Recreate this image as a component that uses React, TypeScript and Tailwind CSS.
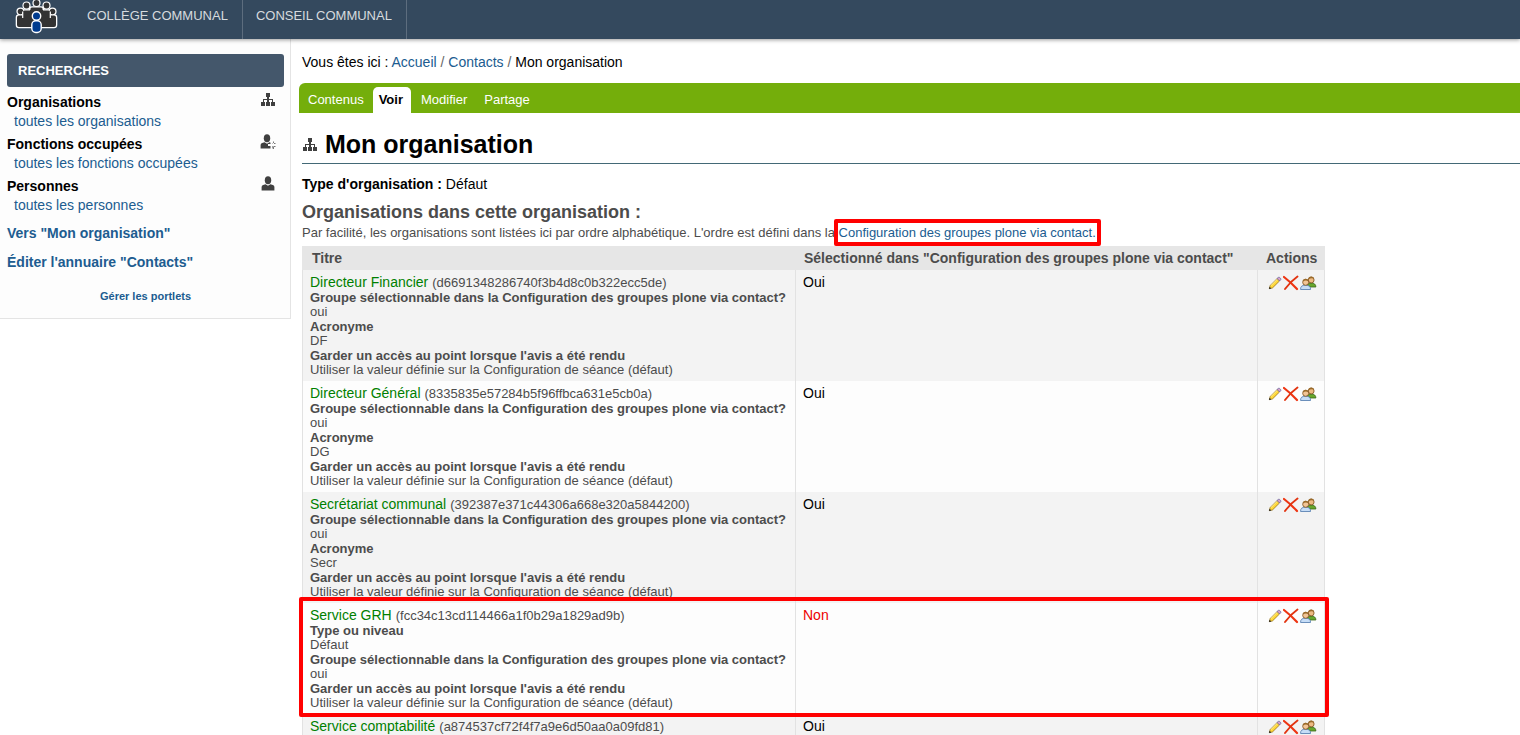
import type { ReactNode } from "react";

type Detail = { label: string; value: string };
type Org = { name: string; uid: string; selected: boolean; details: Detail[]; highlighted?: boolean };

const SELECTABLE = "Groupe sélectionnable dans la Configuration des groupes plone via contact?";
const KEEP_ACCESS: Detail = {
  label: "Garder un accès au point lorsque l'avis a été rendu",
  value: "Utiliser la valeur définie sur la Configuration de séance (défaut)",
};

const organisations: Org[] = [
  {
    name: "Directeur Financier",
    uid: "d6691348286740f3b4d8c0b322ecc5de",
    selected: true,
    details: [{ label: SELECTABLE, value: "oui" }, { label: "Acronyme", value: "DF" }, KEEP_ACCESS],
  },
  {
    name: "Directeur Général",
    uid: "8335835e57284b5f96ffbca631e5cb0a",
    selected: true,
    details: [{ label: SELECTABLE, value: "oui" }, { label: "Acronyme", value: "DG" }, KEEP_ACCESS],
  },
  {
    name: "Secrétariat communal",
    uid: "392387e371c44306a668e320a5844200",
    selected: true,
    details: [{ label: SELECTABLE, value: "oui" }, { label: "Acronyme", value: "Secr" }, KEEP_ACCESS],
  },
  {
    name: "Service GRH",
    uid: "fcc34c13cd114466a1f0b29a1829ad9b",
    selected: false,
    highlighted: true,
    details: [{ label: "Type ou niveau", value: "Défaut" }, { label: SELECTABLE, value: "oui" }, KEEP_ACCESS],
  },
  { name: "Service comptabilité", uid: "a874537cf72f4f7a9e6d50aa0a09fd81", selected: true, details: [] },
];

const LOGO_BODY =
  "M2 17.500q0-2 2-2h3.500V13q0-2.500 2-2.500H15V9.500q0-2 2-2h9q2 0 2 2v1h5.500q2 0 2 2.500v2.500H39q2 0 2 2v7.500q0 2-2 2H4q-2 0-2-2z";

function Logo() {
  return (
    <svg width="44" height="34" viewBox="0 0 44 34" aria-hidden="true">
      <g fill="#fff" stroke="#fff" strokeWidth="2.600" strokeLinejoin="round">
        <path d={LOGO_BODY} />
        <circle cx="5.500" cy="11.500" r="2.800" />
        <circle cx="11.500" cy="5.500" r="2.800" />
        <circle cx="21.500" cy="3" r="2.800" />
        <circle cx="31.500" cy="5.500" r="2.800" />
        <circle cx="37.500" cy="11.500" r="2.800" />
      </g>
      <g fill="#333">
        <path d={LOGO_BODY} />
        <circle cx="5.500" cy="11.500" r="2.800" />
        <circle cx="11.500" cy="5.500" r="2.900" />
        <circle cx="21.500" cy="3" r="2.900" />
        <circle cx="31.500" cy="5.500" r="2.900" />
        <circle cx="37.500" cy="11.500" r="2.800" />
      </g>
      <path
        d="M7.700 11.500v6.500M35.300 11.500v6.500M14.800 6.500v3.500M28.200 6.500v3.500"
        stroke="#fff"
        strokeWidth="1.200"
      />
      <g fill="#003b8e" stroke="#fff" strokeWidth="1.400">
        <circle cx="21.500" cy="16" r="4.200" />
        <rect x="16.800" y="20.700" width="9.400" height="11.800" rx="4" />
      </g>
    </svg>
  );
}

function SitemapIcon() {
  return (
    <svg width="14" height="15" viewBox="0 -1 14 15" fill="#404040" shapeRendering="crispEdges" aria-hidden="true">
      <path d="M5 0h4v4H5zM6 4h2v5H6zM2 6h10v1H2zM2 6h1v3H2zM11 6h1v3h-1zM0 9h4v4H0zM5 9h4v4H5zM10 9h4v4h-4z" />
    </svg>
  );
}

function PersonIcon({ plus }: { plus?: boolean }) {
  return (
    <svg width="16" height="16" viewBox="0 0 16 16" aria-hidden="true">
      <g transform={plus ? "translate(0 0)" : "translate(1 0)"}>
        <ellipse cx="7" cy="4.200" rx="3.200" ry="4" fill="#404040" />
        <path d="M.6 14.500V11q0-1.500 1.500-2l2.500-.8L7 9.800l2.400-1.600 2.500.8q1.500.5 1.500 2v3.500z" fill="#404040" />
      </g>
      {plus && (
        <>
          <path d="M11.500 7.500v7.500M8 11h7.500" stroke="#fdfdfd" strokeWidth="2" />
          <path d="M13.500 7.500V9M13.500 13v2M14 9.500h1.500M14 12.500h1.500" stroke="#777" strokeWidth="1" />
        </>
      )}
    </svg>
  );
}

function PencilIcon() {
  return (
    <svg width="15" height="16" viewBox="0 0 15 16" aria-hidden="true">
      <path d="M1.300 13.700l.9-3.200L9.300 3.400l2.400 2.400L4.500 12.900z" fill="#ffd83a" stroke="#8a6410" strokeWidth=".7" />
      <path d="M2.800 10.700L9.500 4" stroke="#fff2a0" strokeWidth=".9" />
      <path d="M9 3.500L11.500 6l1.200-1.200q.5-.7-.1-1.400l-.9-.9q-.8-.6-1.500 0z" fill="#d9a0c8" stroke="#5a5a98" strokeWidth=".7" />
      <path d="M1 14l.6-2.300 1.700 1.700z" fill="#222" />
    </svg>
  );
}

function CrossIcon() {
  return (
    <svg width="16" height="16" viewBox="0 0 16 16" aria-hidden="true">
      <path d="M1 2q6.500 5 13 12" fill="none" stroke="#ee3512" strokeWidth="2.200" strokeLinecap="round" />
      <path d="M14.500 1.500Q7.500 6.500 2 14" fill="none" stroke="#e2330f" strokeWidth="1.900" strokeLinecap="round" />
    </svg>
  );
}

function GroupIcon() {
  return (
    <svg width="18" height="16" viewBox="-1 0 18 16" aria-hidden="true">
      <path d="M7 12q-.3-3.800 4-4 4.800 0 4.900 4z" fill="#67a62c" stroke="#376716" strokeWidth=".8" />
      <circle cx="11.200" cy="5" r="2.900" fill="#edba83" stroke="#7a4d18" strokeWidth=".8" />
      <path d="M8.300 4.200q.1-2.700 2.900-2.700 2.800 0 2.900 2.700-2-1.700-5.800 0z" fill="#9a6a2a" />
      <path d="M.6 14.500q-.4-4.300 4.900-4.400 5.400.1 5 4.400z" fill="#c6ddf7" stroke="#4d76ab" strokeWidth=".8" />
      <circle cx="5.700" cy="7.300" r="3" fill="#f2c596" stroke="#7a4d18" strokeWidth=".8" />
      <path d="M2.700 6.300q.2-2.600 3-2.600t3 2.600Q6 4.700 2.700 6.300z" fill="#9a6a2a" />
    </svg>
  );
}

function SearchSection({ title, link, icon }: { title: string; link: string; icon: ReactNode }) {
  return (
    <div className="mb-1">
      <div className="flex justify-between">
        <h3 className="font-bold leading-5">{title}</h3>
        <span className="mr-2 flex h-5 w-4 items-start justify-center">{icon}</span>
      </div>
      <a href="#" className="block pl-[7px] leading-[18px] text-[#205c90]">{link}</a>
    </div>
  );
}

function Sidebar() {
  return (
    <aside className="w-[291px] shrink-0 self-start border-r border-b border-[#e4e4e4] bg-[#fdfdfd] pt-[15px] pr-[6px] pb-[14px] pl-[7px]">
      <h2 className="mb-[5px] rounded-[3px] bg-[#44576b] px-[11px] text-[13px] font-bold leading-[33px] text-white">
        RECHERCHES
      </h2>
      <SearchSection title="Organisations" link="toutes les organisations" icon={<SitemapIcon />} />
      <SearchSection title="Fonctions occupées" link="toutes les fonctions occupées" icon={<PersonIcon plus />} />
      <SearchSection title="Personnes" link="toutes les personnes" icon={<PersonIcon />} />
      <a href="#" className="mt-[10px] block font-bold leading-[18px] text-[#205c90]">Vers "Mon organisation"</a>
      <a href="#" className="mt-[11px] block font-bold leading-[18px] text-[#205c90]">Éditer l'annuaire "Contacts"</a>
      <a href="#" className="mt-[17px] block text-center text-[11px] font-bold leading-4 text-[#205c90]">
        Gérer les portlets
      </a>
    </aside>
  );
}

function OrgRow({ org }: { org: Org }) {
  return (
    <tr className="relative align-top odd:bg-[#f3f3f3] even:bg-[#fdfdfd]">
      <td className="border-x border-[#e2e2e2] px-[7px] pt-[5px] pb-1 text-[13px] leading-[14px] text-[#4c4c4c]">
        <div className="flex items-baseline gap-1 leading-[15px]">
          <a href="#" className="text-[14px] text-[#008000]">{org.name}</a>
          <span>({org.uid})</span>
        </div>
        {org.details.map((d) => (
          <dl key={d.label}>
            <dt className="font-bold leading-[15px]">{d.label}</dt>
            <dd>{d.value}</dd>
          </dl>
        ))}
      </td>
      <td className={org.selected ? "border-r border-[#e2e2e2] px-[7px] pt-1 leading-4" : "border-r border-[#e2e2e2] px-[7px] pt-1 leading-4 text-[#ee0000]"}>
        {org.selected ? "Oui" : "Non"}
      </td>
      <td className="border-r border-[#e2e2e2] pt-[5px] pr-[7px] pl-[10px]">
        <div className="flex">
          <button type="button" aria-label="Modifier"><PencilIcon /></button>
          <button type="button" aria-label="Supprimer"><CrossIcon /></button>
          <button type="button" aria-label="Membres"><GroupIcon /></button>
        </div>
        {org.highlighted && (
          <span className="pointer-events-none absolute -top-[6px] -right-1 -bottom-[3px] -left-[3px] z-10 rounded-[2px] border-4 border-[#ff0000]" />
        )}
      </td>
    </tr>
  );
}

export default function App() {
  return (
    <div className="flex h-screen flex-col overflow-hidden bg-white font-['Liberation_Sans',Arial,sans-serif] text-[14px] text-black">
      <header className="relative z-10 flex h-[39px] shrink-0 bg-[#34495e] shadow-[0_1px_4px_rgba(0,0,0,0.4)]">
        <a href="#" aria-label="Accueil" className="w-[74px] shrink-0 pl-[15px]"><Logo /></a>
        <nav className="flex text-[13px] leading-[31px] text-[#d6dbdf]">
          <a href="#" className="border-r border-[#5d6d7e] pr-[14px] pl-[13px]">COLLÈGE COMMUNAL</a>
          <a href="#" className="border-r border-[#5d6d7e] pr-[14px] pl-[13px]">CONSEIL COMMUNAL</a>
        </nav>
      </header>

      <div className="flex grow">
        <Sidebar />
        <main className="min-w-0 grow pl-[11px]">
          <div className="pt-[14px] leading-[18px]">
            Vous êtes ici : <a href="#" className="text-[#205c90]">Accueil</a> <span className="text-[#666666]">/</span>{" "}
            <a href="#" className="text-[#205c90]">Contacts</a> <span className="text-[#666666]">/</span> Mon organisation
          </div>

          <nav className="mt-3 -ml-[3px] flex h-[30px] items-end rounded-tl-[6px] bg-[#74ae0b] text-[13px] leading-[26px] text-white">
            <a href="#" className="px-[9px]">Contenus</a>
            <a href="#" className="rounded-t-[5px] bg-white pr-[8px] pl-[6px] font-bold text-black">Voir</a>
            <a href="#" className="px-[10px]">Modifier</a>
            <a href="#" className="px-[7px]">Partage</a>
          </nav>

          <h1 className="flex items-center gap-2 border-b border-[#436976] pt-[13px] pl-px text-[25px] font-bold leading-[37px]">
            <SitemapIcon />
            Mon organisation
          </h1>

          <p className="mt-[11px] leading-[18px]">
            <b>Type d'organisation :</b> Défaut
          </p>

          <h2 className="mt-2 text-[18px] font-bold leading-[22px] text-[#4c4c4c]">Organisations dans cette organisation :</h2>
          <p className="mt-[2px] text-[13px] leading-4 text-[#4c4c4c]">
            Par facilité, les organisations sont listées ici par ordre alphabétique. L'ordre est défini dans la{" "}
            <a href="#" className="relative text-[#205c90]">
              Configuration des groupes plone via contact.
              <span className="pointer-events-none absolute -inset-x-[5px] -inset-y-[6px] z-10 rounded-[2px] border-4 border-[#ff0000]" />
            </a>
          </p>

          <table className="mt-[5px] border-separate border-spacing-0">
            <thead className="bg-[#e6e6e6] text-left leading-[23px] text-[#4c4c4c]">
              <tr>
                <th className="w-[494px] px-[10px] pt-px">Titre</th>
                <th className="w-[462px] px-2 pt-px">Sélectionné dans "Configuration des groupes plone via contact"</th>
                <th className="w-[67px] pt-px pr-[6px] pl-2">Actions</th>
              </tr>
            </thead>
            <tbody>
              {organisations.map((org) => (
                <OrgRow key={org.uid} org={org} />
              ))}
            </tbody>
          </table>
        </main>
      </div>
    </div>
  );
}
